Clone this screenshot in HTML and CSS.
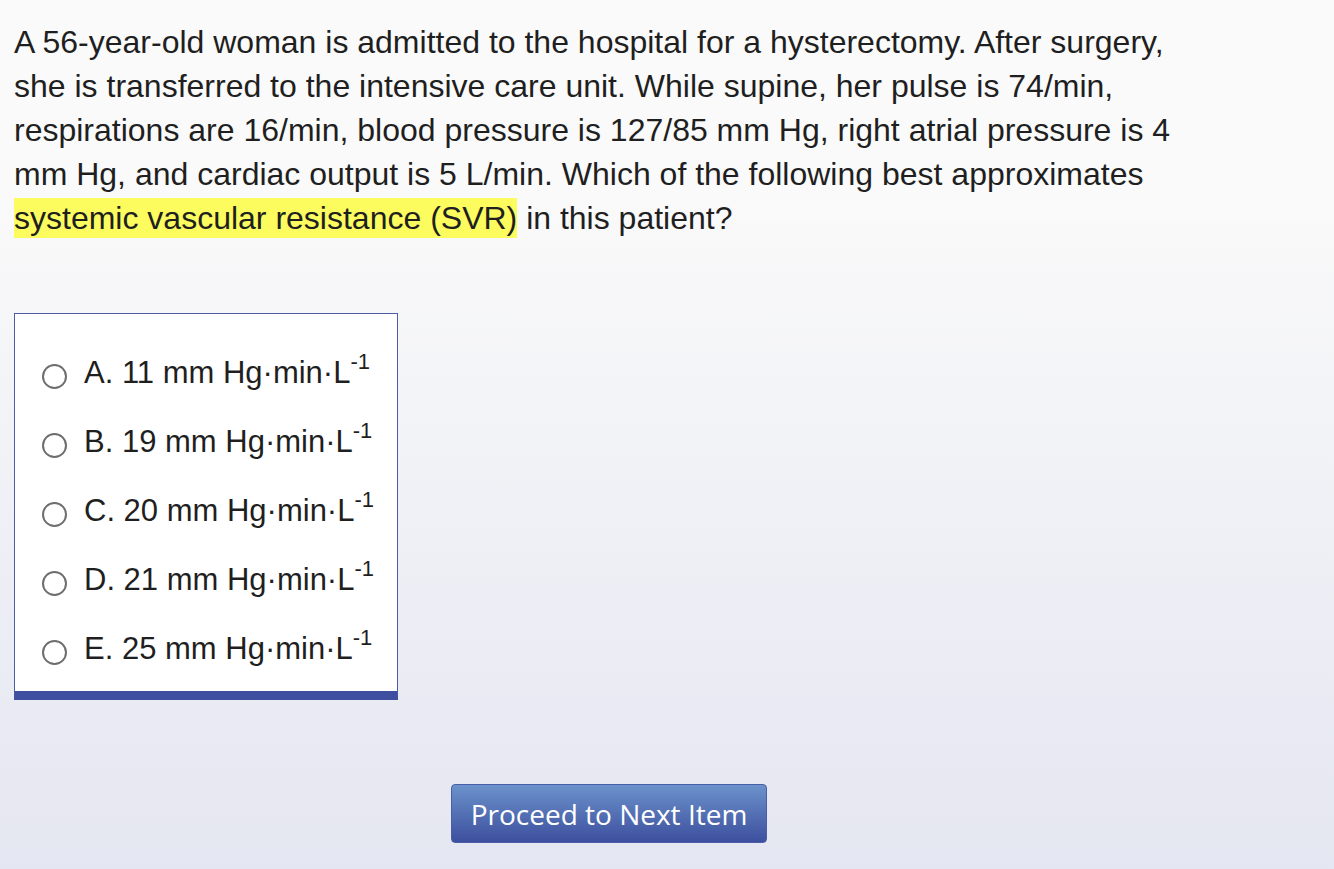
FILE: index.html
```html
<!DOCTYPE html>
<html lang="en">
<head>
<meta charset="utf-8">
<title>Question</title>
<link rel="stylesheet" href="styles.css">
</head>
<body>
<main class="page">
  <p class="stem">A 56-year-old woman is admitted to the hospital for a hysterectomy. After surgery, she is transferred to the intensive care unit. While supine, her pulse is 74/min, respirations are 16/min, blood pressure is 127/85 mm Hg, right atrial pressure is 4 mm Hg, and cardiac output is 5 L/min. Which of the following best approximates <span class="hl">systemic vascular resistance (SVR)</span> in this patient?</p>

  <div class="choices">
    <label class="choice"><span class="radio"></span><span class="txt">A. 11 mm Hg·min·L<sup>-1</sup></span></label>
    <label class="choice"><span class="radio"></span><span class="txt">B. 19 mm Hg·min·L<sup>-1</sup></span></label>
    <label class="choice"><span class="radio"></span><span class="txt">C. 20 mm Hg·min·L<sup>-1</sup></span></label>
    <label class="choice"><span class="radio"></span><span class="txt">D. 21 mm Hg·min·L<sup>-1</sup></span></label>
    <label class="choice"><span class="radio"></span><span class="txt">E. 25 mm Hg·min·L<sup>-1</sup></span></label>
  </div>

  <div class="actions">
    <button class="next" type="button">Proceed to Next Item</button>
  </div>
</main>
</body>
</html>
```

FILE: styles.css
```css
html, body {
  margin: 0;
  padding: 0;
  height: 100%;
}
body {
  background: linear-gradient(to bottom, #fafafa 0%, #fafafa 22%, #e4e6f1 100%);
  font-family: "Liberation Sans", Arial, Helvetica, sans-serif;
  color: #1f1f1f;
  min-height: 869px;
}
.page {
  width: 1190px;
  padding: 20px 0 0 14px;
}
.stem {
  margin: 0;
  font-size: 32px;
  line-height: 44px;
  width: 1174px;
}
.hl {
  background: #fcfc5f;
  padding: 2px 0;
}
.choices {
  margin-top: 73px;
  width: 384px;
  background: #fff;
  border: 1px solid #4d5ca6;
  border-bottom: 9px solid #3e4f9f;
  padding: 39px 0 22px 27px;
  box-sizing: border-box;
  height: 387px;
  display: flex;
  flex-direction: column;
  gap: 29px;
}
.choice {
  display: flex;
  align-items: center;
  height: 40px;
  font-size: 31px;
}
.radio {
  width: 21px;
  height: 21px;
  border: 2px solid #6e6e6e;
  border-radius: 50%;
  box-sizing: content-box;
  margin-right: 17px;
  margin-top: 6px;
  flex: none;
}
.txt sup {
  font-size: 22px;
  line-height: 0;
  vertical-align: 14px;
}
.actions {
  margin-top: 84px;
  display: flex;
  justify-content: center;
}
.next {
  width: 316px;
  height: 59px;
  border: 1px solid #4a5ea8;
  border-radius: 4px;
  background: linear-gradient(to bottom, #6b92cb 0%, #3d4f9e 100%);
  color: #fff;
  font-family: "Open Sans", sans-serif;
  font-size: 28px;
  padding: 0;
  cursor: pointer;
}
```
